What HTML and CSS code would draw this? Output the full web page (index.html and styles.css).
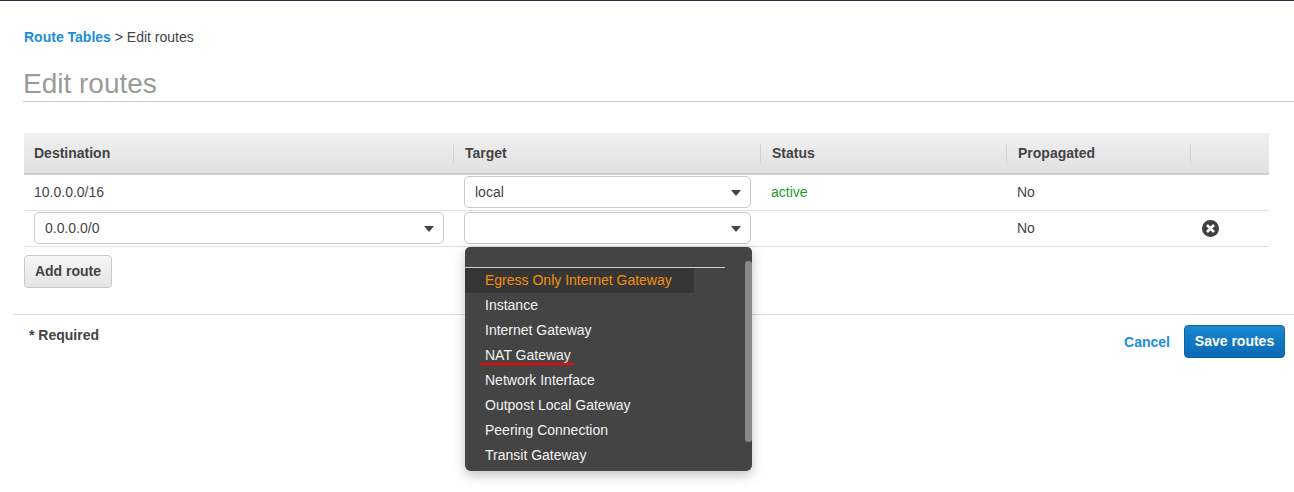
FILE: index.html
```html
<!DOCTYPE html>
<html lang="en">
<head>
<meta charset="utf-8">
<title>Edit routes</title>
<link rel="stylesheet" href="styles.css">
</head>
<body>
<div class="topline"></div>
<main class="content">
  <nav class="crumbs"><a class="crumb-link">Route Tables</a> &gt; Edit routes</nav>
  <h1 class="title">Edit routes</h1>
  <section class="table">
    <div class="row head">
      <div class="th">Destination</div>
      <div class="th">Target</div>
      <div class="th">Status</div>
      <div class="th">Propagated</div>
      <div class="th"></div>
    </div>
    <div class="row body-row">
      <div class="td">10.0.0.0/16</div>
      <div class="td"><div class="select wide">local<span class="caret"></span></div></div>
      <div class="td status">active</div>
      <div class="td">No</div>
      <div class="td"></div>
    </div>
    <div class="row body-row">
      <div class="td"><div class="select full">0.0.0.0/0<span class="caret"></span></div></div>
      <div class="td"><div class="select wide"><span class="caret"></span></div></div>
      <div class="td"></div>
      <div class="td">No</div>
      <div class="td icon-cell">
        <svg class="remove" viewBox="0 0 17 17" width="17" height="17" aria-hidden="true"><circle cx="8.5" cy="8.5" r="8.5" fill="#3f3f3f"/><path d="M5 5l7 7M12 5l-7 7" stroke="#fff" stroke-width="2.6" fill="none"/></svg>
      </div>
    </div>
  </section>
  <button class="btn add">Add route</button>
</main>
<footer class="foot">
  <span class="required">* Required</span>
  <div class="actions">
    <a class="cancel">Cancel</a>
    <button class="btn save">Save routes</button>
  </div>
</footer>
<div class="menu">
  <div class="menu-blank"></div>
  <ul class="menu-list">
    <li class="item active">Egress Only Internet Gateway</li>
    <li class="item">Instance</li>
    <li class="item">Internet Gateway</li>
    <li class="item">NAT Gateway</li>
    <li class="item">Network Interface</li>
    <li class="item">Outpost Local Gateway</li>
    <li class="item">Peering Connection</li>
    <li class="item">Transit Gateway</li>
  </ul>
  <div class="scroll"></div>
</div>
<div class="mark"></div>
</body>
</html>
```
FILE: styles.css
```css
* { box-sizing: border-box; }
html, body { margin: 0; padding: 0; }
body {
  width: 1294px;
  height: 492px;
  overflow: hidden;
  background: #fff;
  color: #444;
  font: 14px/20px "Liberation Sans", Arial, sans-serif;
  position: relative;
}
.topline { height: 1px; background: #232f3e; }
.content { padding: 26px 25px 0 24px; }
.crumbs { height: 20px; }
.crumb-link { color: #1b8de0; font-weight: 700; }
.title {
  margin: 14px 0 31px -1px;
  padding: 6px 0 0;
  height: 41px;
  width: 1271px;
  border-bottom: 1px solid #c9c9c9;
  color: #9a9a9a;
  font-size: 28px;
  font-weight: 400;
  line-height: 34px;
}
.table { width: 1245px; }
.row {
  display: grid;
  grid-template-columns: 430px 307px 246px 184px 78px;
}
.head {
  height: 42px;
  background: linear-gradient(#f0f0f0, #e1e1e1);
  border-bottom: 2px solid #cfcfcf;
  align-items: center;
  font-weight: 700;
}
.th { padding-left: 10px; height: 19px; line-height: 19px; position: relative; }
.th:nth-child(2) { padding-left: 11px; }
.th:nth-child(3) { padding-left: 11px; }
.th:nth-child(4) { padding-left: 11px; }
.th:not(:last-child)::after {
  content: "";
  position: absolute;
  right: 0;
  top: 0;
  width: 1px;
  height: 19px;
  background: #d2d2d2;
}
.body-row {
  height: 36px;
  padding-top: 1px;
  border-bottom: 1px solid #e0e0e0;
}
.td { padding-left: 10px; height: 32px; line-height: 32px; }
.status { color: #1d9c2f; }
.select {
  height: 32px;
  border: 1px solid #c8c8c8;
  border-radius: 5px;
  background: #fff;
  padding: 0 0 0 10px;
  line-height: 30px;
  position: relative;
}
.select.full { width: 410px; }
.select.wide { width: 287px; }
.caret {
  position: absolute;
  right: 9px;
  top: 13px;
  width: 0;
  height: 0;
  border-left: 5.5px solid transparent;
  border-right: 5.5px solid transparent;
  border-top: 6px solid #444;
}
.icon-cell { padding-left: 11px; display: flex; }
.remove { display: block; margin-top: 8px; }
.btn {
  font: 700 14px/20px "Liberation Sans", Arial, sans-serif;
  border-radius: 4px;
  cursor: pointer;
}
.add {
  display: block;
  margin-top: 8px;
  width: 88px;
  height: 33px;
  padding: 0 0 2px;
  color: #444;
  background: linear-gradient(#f6f6f6, #e3e3e3);
  border: 1px solid #c8c8c8;
}
.foot {
  position: absolute;
  left: 14px;
  right: 0;
  top: 314px;
  border-top: 1px solid #dcdcdc;
  display: flex;
  justify-content: space-between;
  padding: 10px 9px 0 15px;
}
.required { font-weight: 700; line-height: 20px; }
.actions { display: flex; align-items: center; gap: 14px; }
.cancel { color: #1b8de0; font-weight: 700; }
.save {
  width: 101px;
  height: 33px;
  padding: 0 0 2px;
  color: #fff;
  background: linear-gradient(#1a87d0, #0a69b5);
  border: 1px solid #0b65a8;
}
.menu {
  position: absolute;
  left: 465px;
  top: 247px;
  width: 287px;
  height: 224px;
  background: #444;
  border-radius: 5px 5px 6px 6px;
  box-shadow: 0 4px 12px rgba(0, 0, 0, .25);
  color: #f2f2f2;
}
.menu-blank { height: 21px; width: 260px; border-bottom: 1px solid #cfcfcf; }
.menu-list { list-style: none; margin: 0; padding: 0; }
.item { height: 25px; line-height: 25px; padding-left: 20px; }
.item.active { width: 229px; background: #363636; color: #f28f0e; }
.scroll {
  position: absolute;
  right: 0;
  top: 14px;
  width: 7px;
  height: 181px;
  background: #888;
  border-radius: 3px;
}
.mark {
  position: absolute;
  left: 480px;
  top: 363px;
  width: 94px;
  height: 2px;
  background: #f00;
  border-radius: 1px;
}
```
